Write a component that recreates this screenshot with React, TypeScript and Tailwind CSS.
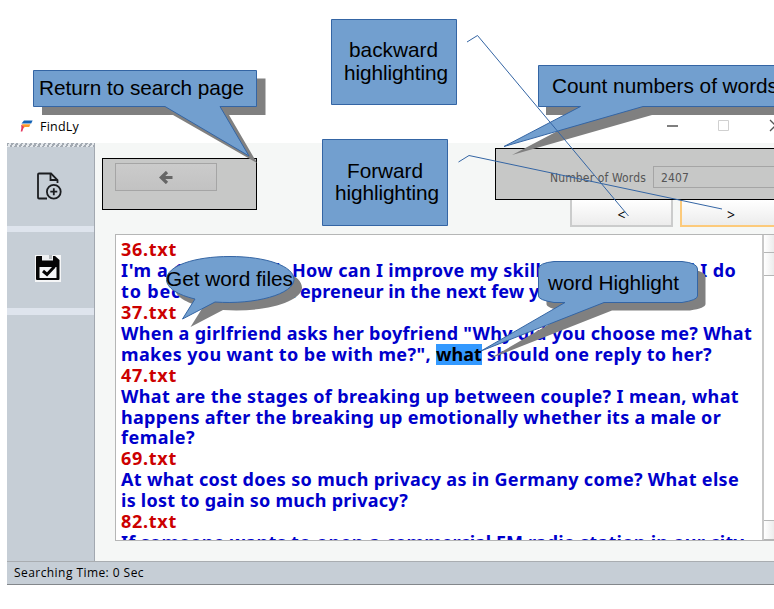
import { useLayoutEffect, useRef, type ReactNode } from "react";

/* Stretches a run of text to an exact pixel width through letter spacing. */
function Fit({ w, children, className = "" }: { w: number; children: ReactNode; className?: string }) {
  const ref = useRef<HTMLSpanElement>(null);
  useLayoutEffect(() => {
    const el = ref.current;
    if (!el) return;
    el.style.letterSpacing = "0px";
    const n = (el.textContent || "").length;
    const natural = el.getBoundingClientRect().width;
    el.style.letterSpacing = `${(w - natural) / n}px`;
  }, [w]);
  return (
    <span ref={ref} className={`inline-block whitespace-pre ${className}`}>
      {children}
    </span>
  );
}

const results: { text: [string, number, boolean?][]; file?: boolean }[] = [
  { text: [["36.txt", 56]], file: true },
  { text: [["I'm a 19-year-old. ", 171], ["How can I improve my skills or what should I do", 444]] },
  { text: [["to become an entr", 179], ["epreneur in the next few ", 229], ["years?", 60]] },
  { text: [["37.txt", 56]], file: true },
  { text: [['When a girlfriend asks her boyfriend "Why did you choose me? What', 631]] },
  { text: [['makes you want to be with me?", ', 315], ["what", 46, true], [" should one reply to her?", 230]] },
  { text: [["47.txt", 56]], file: true },
  { text: [["What are the stages of breaking up between couple? I mean, what", 618]] },
  { text: [["happens after the breaking up emotionally whether its a male or", 600]] },
  { text: [["female?", 74]] },
  { text: [["69.txt", 56]], file: true },
  { text: [["At what cost does so much privacy as in Germany come? What else", 618]] },
  { text: [["is lost to gain so much privacy?", 287]] },
  { text: [["82.txt", 56]], file: true },
  { text: [["If someone wants ", 170], ["to open a ", 95], ["commercial ", 110], ["FM radio ", 84], ["station in our city", 164]] },
];

function Logo() {
  return (
    <svg width="13" height="12" viewBox="0 0 13 12">
      <path d="M4 0.500H12.600L11.200 3.500H1.500Z" fill="#1262b5" />
      <path d="M2 4.200H10.400L9.200 7H4.800L2.800 8.800Z" fill="#f99a2b" />
      <path d="M1.200 4.500L3.800 6.800L2.300 11.500H0.700L1.400 8Z" fill="#e5395f" />
    </svg>
  );
}

function AddFileIcon() {
  return (
    <svg width="26" height="28" viewBox="0 0 26 28" fill="none" stroke="#1b1d20" strokeWidth="1.8">
      <path d="M11 26.500H3Q2 26.500 2 25.500V2.500Q2 1.500 3 1.500H15L21.500 8V11" />
      <path d="M14.500 2V8H21.500" />
      <circle cx="17.800" cy="19.700" r="6.900" />
      <path d="M17.800 16.200V23.200M14.300 19.700H21.300" />
    </svg>
  );
}

function SaveIcon() {
  return (
    <svg width="26" height="27" viewBox="0 0 26 27">
      <path d="M0 0H26V27H0Z" fill="#f5f6f7" />
      <path d="M2 1H20L24.500 5V24Q24.500 25 23.500 25H2Q1 25 1 24V2Q1 1 2 1Z" fill="#050505" />
      <path d="M7 0H18V5.500H7Z" fill="#eef0f2" />
      <path d="M14 0H17V4H14Z" fill="#b8bcc0" />
      <path d="M4.500 12H21.500V23H4.500Z" fill="#f5f6f7" />
      <path d="M8 16L12 19.500L19.500 11.500" fill="none" stroke="#050505" strokeWidth="3" />
    </svg>
  );
}

const BLUE = "#729fcf";
const EDGE = "#3465a4";

/* Callout balloons, their shadows and the leader lines. */
function Annotations() {
  return (
    <svg className="absolute left-0 top-0" width="774" height="609" viewBox="0 0 774 609" fontFamily="'Liberation Sans', Arial, sans-serif" fontSize="20.8" fill="#000">
      <path fill="#808080" d="M42 78.500H265.500V115H229L257 163L173 115H42Z" />
      <path fill={BLUE} stroke={EDGE} d="M33.500 70.500H256.500V106.500H220L249 156L165 106.500H33.500Z" />
      <text x="39" y="95" textLength="205">Return to search page</text>

      <path fill="#808080" d="M546 73.500H774V115H652L512 155L588 115H546Z" />
      <path fill={BLUE} stroke={EDGE} d="M780 65.500H538.500V106.500H580.500L504 146.500L643 106.500H780Z" />
      <text x="552" y="93" textLength="226">Count numbers of words</text>

      <path fill={BLUE} stroke={EDGE} d="M331.500 19.500H456.500V104.500H331.500Z" />
      <text x="349" y="57" textLength="89">backward</text>
      <text x="344" y="80" textLength="104">highlighting</text>

      <path fill={BLUE} stroke={EDGE} d="M322.500 139.500H447.500V225.500H322.500Z" />
      <text x="347" y="178" textLength="76">Forward</text>
      <text x="335" y="200" textLength="104">highlighting</text>

      <path fill="#808080" transform="translate(8 8)" d="M195 299L182.500 319L215 302C255 305 294 294 294 279.500C294 266 266 256.500 230 256.500C194 256.500 166.500 266 166.500 279.500C166.500 288 178 295 195 299Z" />
      <path fill={BLUE} stroke={EDGE} d="M195 299L182.500 319L215 302C255 305 294 294 294 279.500C294 266 266 256.500 230 256.500C194 256.500 166.500 266 166.500 279.500C166.500 288 178 295 195 299Z" />
      <text x="166" y="286" textLength="127">Get word files</text>

      <path fill="#808080" transform="translate(8 8)" d="M554 261.500H682Q697.500 263 697.500 269V296Q697.500 300 682 302.500H604L481 351L565 302.500H554Q538.500 300 538.500 296V269Q538.500 263 554 261.500Z" />
      <path fill={BLUE} stroke={EDGE} d="M554 261.500H682Q697.500 263 697.500 269V296Q697.500 300 682 302.500H604L481 351L565 302.500H554Q538.500 300 538.500 296V269Q538.500 263 554 261.500Z" />
      <text x="548" y="290" textLength="131">word Highlight</text>

      <g fill="none" stroke={EDGE}>
        <path d="M467 42L477.500 35.500L628.500 216" />
        <path d="M458.500 162L469 155.500L722 209" />
      </g>
    </svg>
  );
}

export default function App() {
  return (
    <div className="relative h-[609px] w-[774px] overflow-hidden bg-white pl-[7px] pt-[111px] font-['Open_Sans','Noto_Sans',sans-serif] text-xs text-black">
      <header className="flex h-8 items-center pl-[13px] pb-0.5">
        <Logo />
        <span className="ml-[7px] mt-0.5 text-[12.5px]"><Fit w={39}>FindLy</Fit></span>
        <div className="ml-auto flex items-center">
          <svg width="110" height="14" viewBox="0 0 110 14" fill="none">
            <path d="M3 7H14" stroke="#555" strokeWidth="1.500" />
            <path d="M54.500 1.500H64.500V11.500H54.500Z" stroke="#d0d0d0" />
            <path d="M106 1L117 12M106 12L117 1" stroke="#555" strokeWidth="1.300" />
          </svg>
        </div>
      </header>

      <div className="flex h-[418px]">
        <aside className="flex w-[88px] shrink-0 flex-col border-r border-[#a2a8b0] bg-[#c6ced6]">
          <div className="h-1 bg-[repeating-linear-gradient(120deg,#a3aab2_0_2px,#e4e8ec_2px_4px)]" />
          <div className="flex h-[79px] items-center justify-center pb-0.5 pr-[3px]"><AddFileIcon /></div>
          <div className="h-1.5 bg-[#dee4ed]" />
          <div className="flex h-[76px] items-center justify-center pb-[3px] pr-1.5"><SaveIcon /></div>
          <div className="h-[7px] bg-[#dee4ed]" />
        </aside>

        <main className="flex-1 overflow-hidden bg-[#f5f7f6]">
          <div className="flex h-[56px] items-start justify-between pl-[7px] pt-[5px]">
            <div className="mt-[10px] h-[52px] w-[155px] shrink-0 border-[1.5px] border-black bg-[#c7c8c7] pl-3 pt-1">
              <div className="flex h-7 w-[102px] items-center justify-center border border-[#a5a5a5] bg-gradient-to-b from-[#cbcbcb] to-[#c2c2c2]">
                <svg width="14" height="13" viewBox="0 0 14 13" fill="none" stroke="#666" strokeWidth="3.200">
                  <path d="M13.500 6.500H3M8 1L2.300 6.500L8 12" />
                </svg>
              </div>
            </div>
            <div className="flex h-[52px] w-[279px] items-start border-[1.5px] border-r-0 border-black bg-[#c7c8c7] pl-[54px] pt-[17px] font-['DejaVu_Sans_Condensed','DejaVu_Sans',sans-serif] text-[#555]">
              <span className="pt-[4px]"><Fit w={96}>Number of Words</Fit></span>
              <div className="ml-[7px] flex h-[22px] flex-1 items-center border border-r-0 border-[#a5a5a5] pl-[7px] pt-px"><Fit w={28}>2407</Fit></div>
            </div>
          </div>
          <div className="flex h-[35px] items-start justify-end gap-[7px] pt-px">
            <div className="h-[27px] w-[103px] border-2 border-t-0 border-[#cbcccc] bg-gradient-to-b from-white to-[#ececec] text-center text-sm leading-[29px]">&lt;</div>
            <div className="h-[27px] w-[94px] border-2 border-r-0 border-t-0 border-[#fcca7b] bg-gradient-to-b from-white to-[#ececec] pl-[6px] text-center text-sm leading-[29px]">&gt;</div>
          </div>
          <div className="ml-5 flex h-[307px] border border-r-0 border-[#b5b6b6] bg-white">
            <div className="w-[646px] shrink-0 overflow-hidden pl-[5px] pt-[4.3px] font-['Noto_Sans',sans-serif] text-[18px] font-bold leading-[20.92px]">
              {results.map((line, i) => (
                <div key={i} className={`h-[20.92px] whitespace-pre ${line.file ? "text-[#cc0000]" : "text-[#0000cc]"}`}>
                  {line.text.map(([t, w, hit], j) => (
                    <Fit key={j} w={w} className={hit ? "bg-[#3399ff] text-black" : ""}>{t}</Fit>
                  ))}
                </div>
              ))}
            </div>
            <div className="flex flex-1 flex-col border-l-2 border-[#c8c8c8] bg-white">
              <div className="h-[18px] border-b border-[#b5b6b6] bg-gradient-to-r from-white to-[#ececec]" />
              <div className="h-[23px] border-b border-[#b5b6b6] bg-gradient-to-r from-white to-[#ececec]" />
              <div className="mt-auto h-5 border-y border-[#b5b6b6] bg-gradient-to-r from-white to-[#ececec]" />
            </div>
          </div>
        </main>
      </div>

      <footer className="flex h-6 items-center border-y border-b-[#83878b] border-t-[#a9adb1] bg-[#c6ced6] pl-[7px]">
        <Fit w={130}>Searching Time: 0 Sec</Fit>
      </footer>

      <Annotations />
    </div>
  );
}
